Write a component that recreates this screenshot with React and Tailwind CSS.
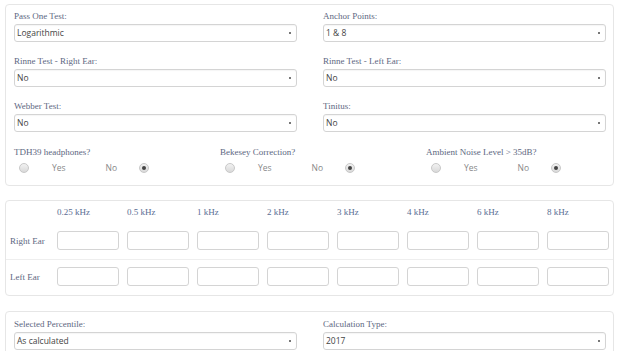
import React from 'react';

const serif = { fontFamily: '"Liberation Serif", "Times New Roman", serif' };

const Select = ({ value }) => (
  <div className="relative h-[18px] w-full rounded-[3px] border border-[#d4d4d4] bg-white shadow-[inset_0_1px_1px_rgba(0,0,0,0.04)]">
    <span className="absolute left-[2px] top-[2px] text-[8.5px] leading-[12px] text-[#444]">{value}</span>
    <span className="absolute right-[5px] top-[7px] h-[2px] w-[2px] bg-[#777]" />
  </div>
);

const Field = ({ label, value }) => (
  <div className="flex flex-col">
    <label className="h-[12px] text-[9px] leading-[12px] text-[#5d6781]" style={serif}>
      {label}
    </label>
    <div className="mt-[2px]">
      <Select value={value} />
    </div>
  </div>
);

const Radio = ({ checked }) => (
  <span className="flex h-[10px] w-[10px] items-center justify-center rounded-full border border-[#c8c8c8] bg-gradient-to-b from-[#f2f2f2] to-[#d9d9d9]">
    {checked && <span className="h-[4px] w-[4px] rounded-full bg-[#444]" />}
  </span>
);

const RadioGroup = ({ label }) => (
  <div className="flex flex-col">
    <span className="h-[12px] text-[9px] leading-[12px] text-[#5d6781]" style={serif}>
      {label}
    </span>
    <div className="mt-[4px] flex h-[12px] items-center text-[8.5px] text-[#888]">
      <span className="ml-[5px]"><Radio /></span>
      <span className="ml-[23px]">Yes</span>
      <span className="ml-[40px]">No</span>
      <span className="ml-[22px]"><Radio checked /></span>
    </div>
  </div>
);

const freqs = ['0.25 kHz', '0.5 kHz', '1 kHz', '2 kHz', '3 kHz', '4 kHz', '6 kHz', '8 kHz'];

const Cell = () => (
  <div className="h-[19px] w-[62px] rounded-[3px] border border-[#d4d4d4] bg-white" />
);

export default function App() {
  return (
    <div className="min-h-[351px] w-[622px] overflow-hidden bg-white pl-[5px] pt-[4px]" style={{ fontFamily: '"Open Sans", "Liberation Sans", sans-serif' }}>
      {/* Test options */}
      <div className="w-[609px] rounded-[4px] border border-[#e6e6e6] pb-[11px] pl-[8px] pr-[7px] pt-[5px]">
        <div className="grid grid-cols-2 gap-x-[26px] gap-y-[13px]">
          <Field label="Pass One Test:" value="Logarithmic" />
          <Field label="Anchor Points:" value="1 & 8" />
          <Field label="Rinne Test - Right Ear:" value="No" />
          <Field label="Rinne Test - Left Ear:" value="No" />
          <Field label="Webber Test:" value="No" />
          <Field label="Tinitus:" value="No" />
        </div>
        <div className="mt-[14px] grid grid-cols-[206px_206px_1fr]">
          <RadioGroup label="TDH39 headphones?" />
          <RadioGroup label="Bekesey Correction?" />
          <RadioGroup label="Ambient Noise Level > 35dB?" />
        </div>
      </div>

      {/* Thresholds */}
      <div className="mt-[14px] w-[609px] rounded-[4px] border border-[#e6e6e6] pb-[9px] pl-[4px] pt-[5px]">
        <div className="grid grid-cols-[39px_repeat(8,62px)] gap-x-[8px]">
          <span />
          {freqs.map((f) => (
            <span key={f} className="h-[12px] text-[9px] leading-[12px] text-[#5a6d93]" style={serif}>
              {f}
            </span>
          ))}
        </div>
        <div className="mt-[13px] grid grid-cols-[39px_repeat(8,62px)] items-center gap-x-[8px] pb-[9px]">
          <span className="pt-[2px] text-[9px] text-[#5d6781]" style={serif}>Right Ear</span>
          {freqs.map((f) => <Cell key={f} />)}
        </div>
        <div className="-ml-[4px] border-t border-[#eeeeee]" />
        <div className="mt-[7px] grid grid-cols-[39px_repeat(8,62px)] items-center gap-x-[8px]">
          <span className="pt-[2px] text-[9px] text-[#5d6781]" style={serif}>Left Ear</span>
          {freqs.map((f) => <Cell key={f} />)}
        </div>
      </div>

      {/* Calculation */}
      <div className="mt-[15px] w-[609px] rounded-[4px] border border-[#e6e6e6] pb-[8px] pl-[8px] pr-[7px] pt-[6px]">
        <div className="grid grid-cols-2 gap-x-[26px]">
          <Field label="Selected Percentile:" value="As calculated" />
          <Field label="Calculation Type:" value="2017" />
        </div>
      </div>
    </div>
  );
}
